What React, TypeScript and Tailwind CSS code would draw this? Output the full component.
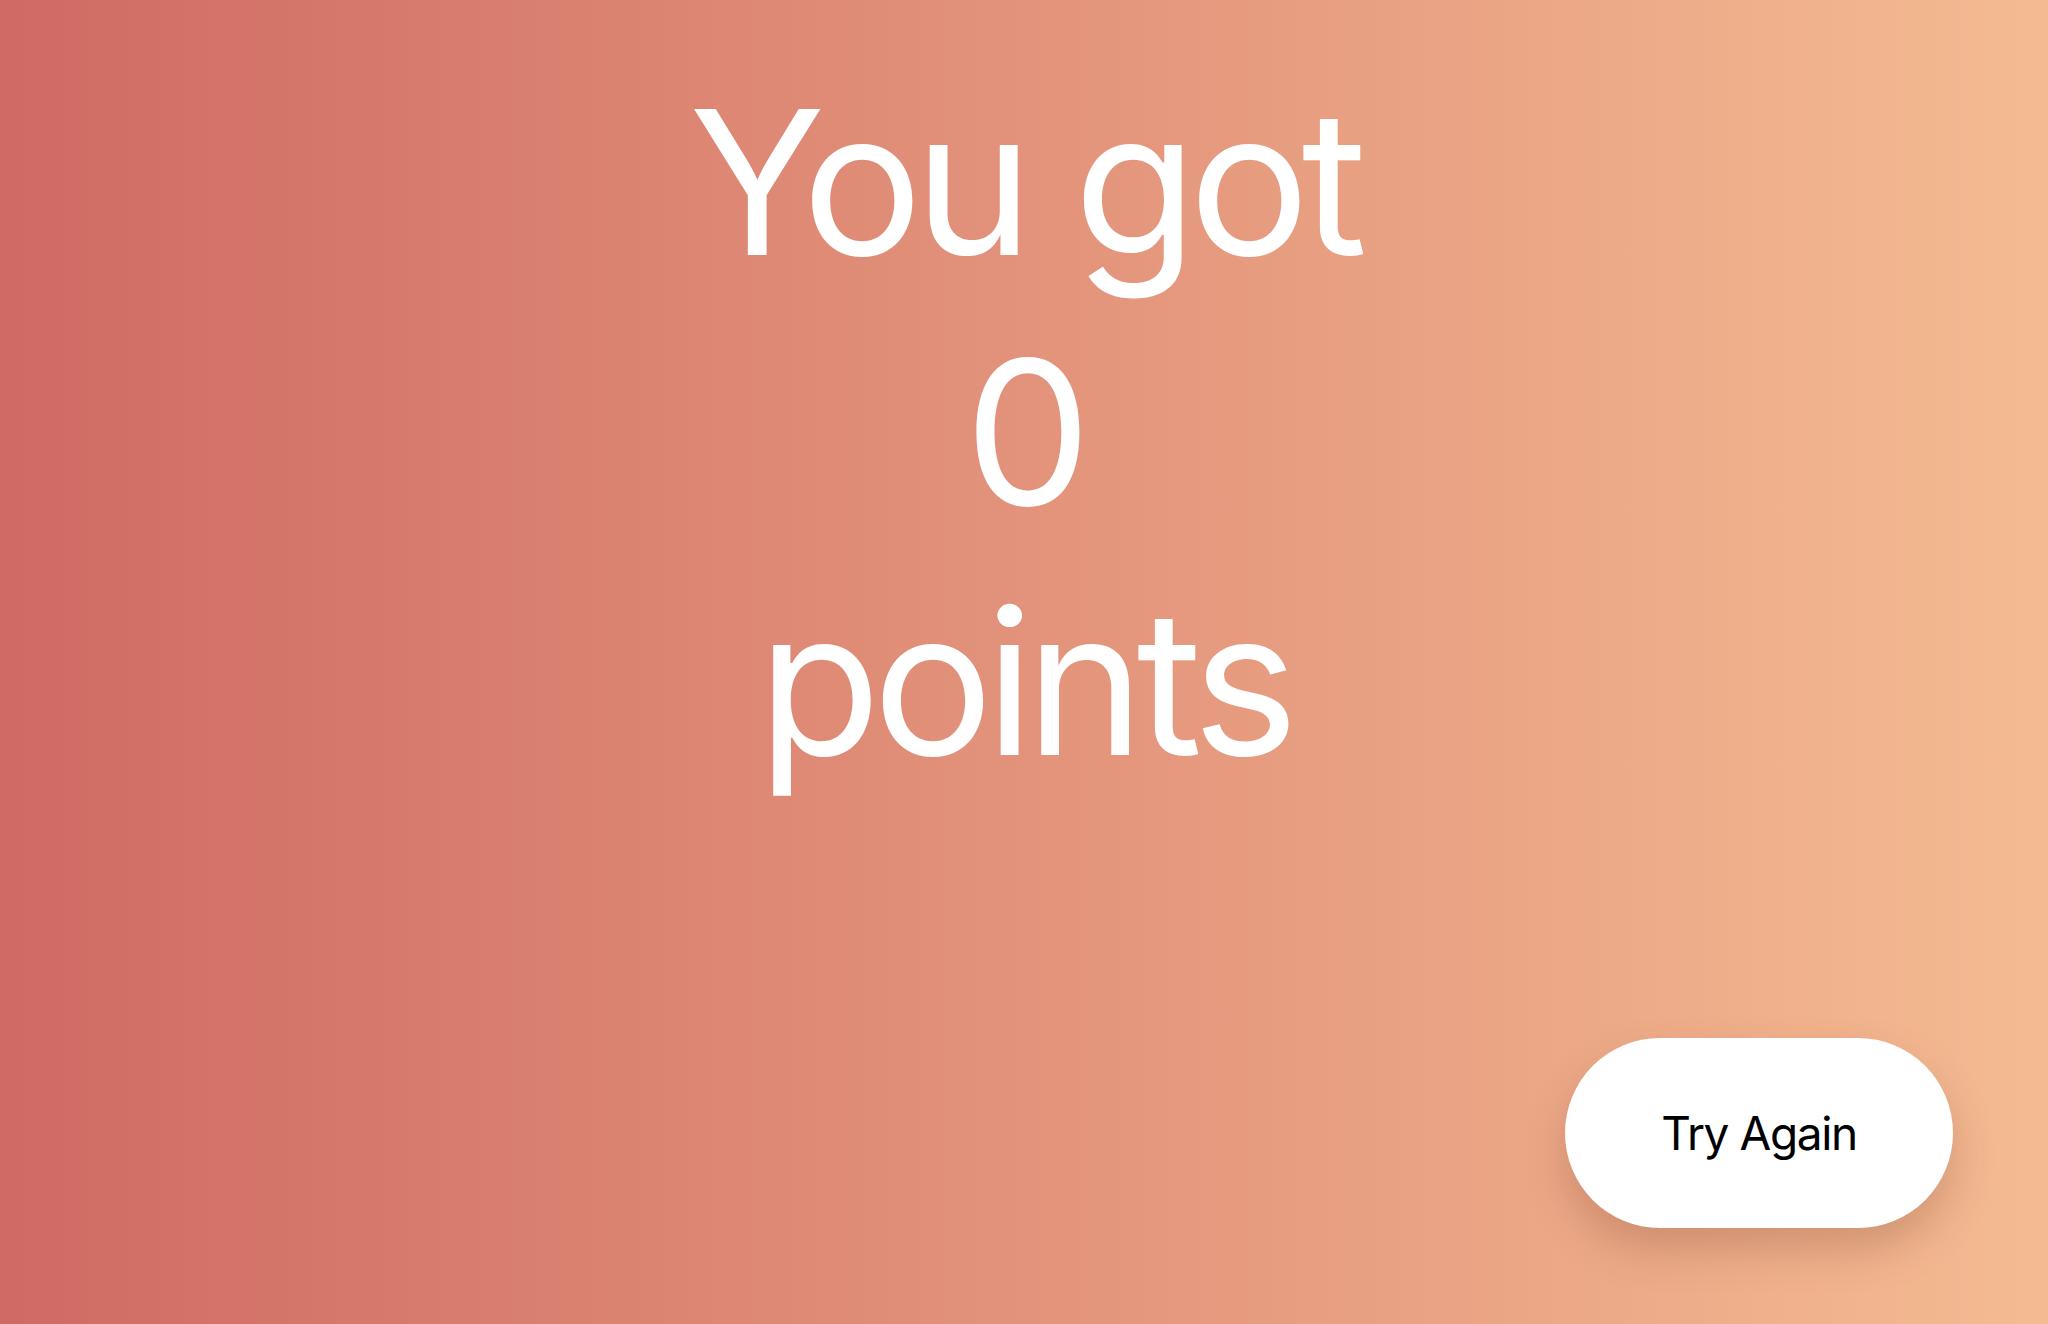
export default function App() {
  return (
    <div
      className="relative h-screen w-full overflow-hidden bg-linear-to-r from-[#cf6a64] to-[#f4bb92] text-white"
      style={{ fontFamily: "Inter, 'Noto Sans', sans-serif" }}
    >
      <div className="flex flex-col items-center pt-[57px] text-[201px] leading-[250px] font-normal tracking-[-0.04em]">
        <div>You got</div>
        <div>0</div>
        <div>points</div>
      </div>

      <button className="absolute right-[95px] bottom-[96px] flex h-[190px] w-[388px] items-center justify-center rounded-full bg-white text-[46px] tracking-[-0.03em] text-black shadow-[0_22px_40px_rgba(120,60,40,0.25)]">
        Try Again
      </button>
    </div>
  );
}
